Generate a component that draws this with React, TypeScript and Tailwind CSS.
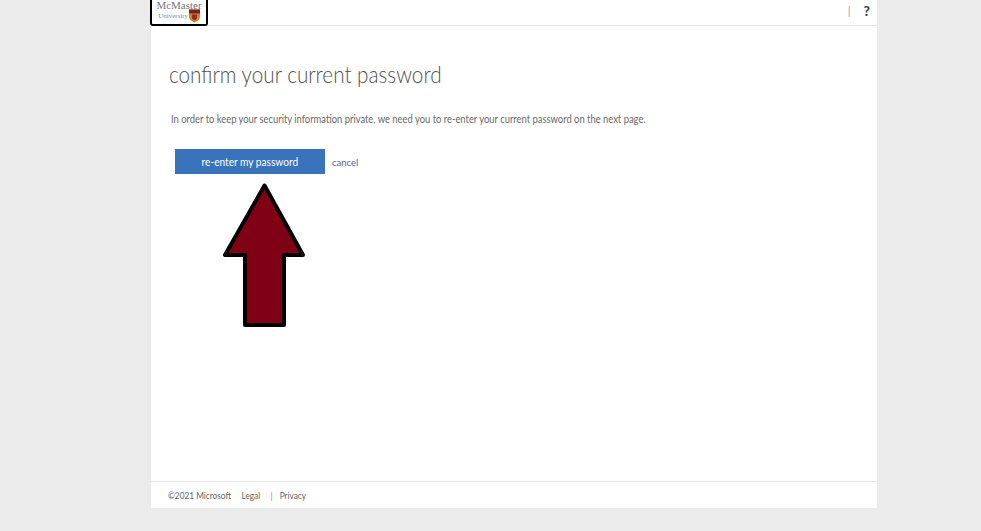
export default function App() {
  return (
    <div className="relative h-[531px] w-[981px] overflow-hidden bg-[#ebebeb] font-['Lato',sans-serif]">
      {/* Page column */}
      <div className="ml-[151px] flex h-[508px] w-[726px] flex-col bg-white">
        {/* Header */}
        <header className="flex h-[26px] shrink-0 items-start justify-between border-b border-[#e3e3e3]">
          <div className="-ml-px flex h-[26px] w-[58px] flex-col items-center justify-end overflow-hidden rounded-b-[3px] border-2 border-t-0 border-black bg-white pb-px">
            <span className="font-['Liberation_Serif',serif] text-[11px] leading-[8px] text-[#77787b]">McMaster</span>
            <div className="flex items-center gap-[1px]">
              <span className="font-['Liberation_Serif',serif] text-[7px] leading-[10px] text-[#8a8b8d]">University</span>
              <svg width="11" height="14" viewBox="0 0 11 13">
                <path d="M0 0h11v7c0 3-3 5-5.500 6C3 12 0 10 0 7z" fill="#c98a1e" />
                <path d="M0 0h11v4H0z" fill="#7a1f2b" />
                <path d="M3 5h5v4l-2.500 2L3 9z" fill="#a3262a" />
              </svg>
            </div>
          </div>
          <div className="mr-[7px] mt-[3px] flex items-center gap-[13px]">
            <span className="text-[11px] leading-[16px] text-[#a59aa8]">|</span>
            <span className="text-[14px] font-bold leading-[16px] text-[#2b3a4d]">?</span>
          </div>
        </header>

        {/* Main */}
        <main className="flex-1 pl-[18px]">
          <h1 className="mt-[32px] origin-left scale-x-[0.9] whitespace-nowrap text-[23px] font-light leading-[32px] text-[#505050]">confirm your current password</h1>
          <p className="ml-[2px] mt-[22px] origin-left scale-x-[0.895] whitespace-nowrap text-[10.500px] leading-[14px] text-[#6a6a6a]">
            In order to keep your security information private, we need you to re-enter your current password on the next page.
          </p>
          <div className="ml-[6px] mt-[23px] flex items-center gap-[7px]">
            <button className="h-[25px] w-[150px] bg-[#3873bb] text-[11.500px] leading-none text-white">
              <span className="inline-block scale-x-[0.88] whitespace-nowrap">re-enter my password</span>
            </button>
            <a className="pt-[3px] text-[9.500px] text-[#5c5a9c]">cancel</a>
          </div>
        </main>

        {/* Footer */}
        <footer className="flex h-[27px] shrink-0 items-center border-t border-[#e6e6e6] pl-[17px] pt-[3px]">
          <div className="flex origin-left scale-x-[0.87] whitespace-nowrap text-[9.500px] text-[#636363]">
            <span>©2021 Microsoft</span>
            <span className="ml-[12px]">Legal</span>
            <span className="ml-[12px] mr-[8px] text-[#8a8a8a]">|</span>
            <span>Privacy</span>
          </div>
        </footer>
      </div>

      {/* Annotation arrow */}
      <svg className="absolute left-[220px] top-[180px]" width="90" height="150" viewBox="0 0 90 150">
        <path d="M44.500 5.500 L5 75 H25 V145 H64 V75 H83 Z" fill="#800016" stroke="#000" strokeWidth="4" strokeLinejoin="round" />
      </svg>
    </div>
  );
}
